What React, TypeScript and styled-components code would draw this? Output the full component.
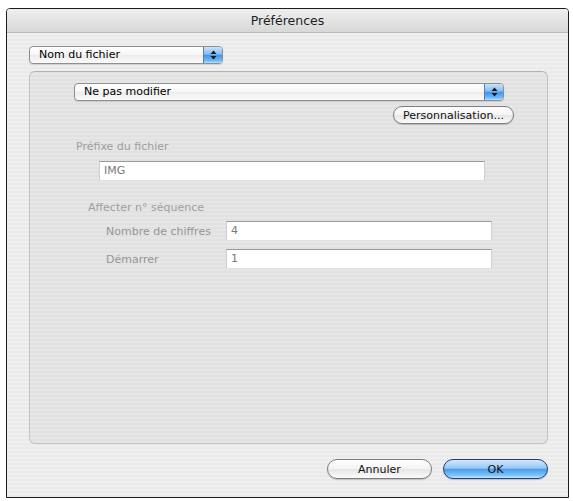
import styled, { createGlobalStyle } from "styled-components";

const GlobalStyle = createGlobalStyle`
  html, body {
    margin: 0;
    padding: 0;
    background: #ffffff;
  }
  body {
    font-family: "DejaVu Sans", "Lucida Grande", sans-serif;
  }
`;

const Page = styled.div`
  padding: 8px 0 0 6px;
`;

const Window = styled.div`
  box-sizing: border-box;
  width: 563px;
  height: 490px;
  display: flex;
  flex-direction: column;
  border: 1px solid #1c1c1c;
  border-radius: 4px 4px 0 0;
  overflow: hidden;
  background: repeating-linear-gradient(
    to bottom,
    #efefef 0,
    #efefef 2px,
    #eaeaea 2px,
    #eaeaea 4px
  );
`;

const TitleBar = styled.div`
  height: 23px;
  flex: none;
  display: flex;
  align-items: center;
  justify-content: center;
  font-size: 12.5px;
  color: #1e1e1e;
  border-bottom: 1px solid #bcbcbc;
  background: linear-gradient(#efefef, #d8d8d8);
`;

const Content = styled.div`
  flex: 1;
  display: flex;
  flex-direction: column;
  padding: 13px 20px 0 22px;
`;

const PopUp = styled.div<{ $width: number; $indent: number }>`
  box-sizing: border-box;
  display: flex;
  align-self: flex-start;
  width: ${({ $width }) => $width}px;
  height: 18px;
  margin-left: ${({ $indent }) => $indent}px;
  border: 1px solid #8f8f8f;
  border-radius: 4px;
  overflow: hidden;
  background: linear-gradient(#ffffff, #f6f6f6 50%, #ececec 51%, #fbfbfb);
  box-shadow: 0 1px 1px rgba(0, 0, 0, 0.12);
  font-size: 11px;
  color: #000;
`;

const PopUpText = styled.span`
  flex: 1;
  padding-left: 9px;
  line-height: 16px;
`;

const PopUpCap = styled.span`
  width: 18px;
  display: flex;
  align-items: center;
  justify-content: center;
  border-left: 1px solid #4f7fc0;
  background: linear-gradient(
    #c9e2fb,
    #86bbf1 45%,
    #4294e8 52%,
    #6fb8f8 85%,
    #b8e0ff
  );
`;

const GroupBox = styled.div`
  box-sizing: border-box;
  height: 373px;
  margin-top: 7px;
  padding-top: 11px;
  display: flex;
  flex-direction: column;
  border: 1px solid #c2c2c2;
  border-top-color: #b2b2b2;
  border-radius: 6px;
  background: rgba(0, 0, 0, 0.035);
`;

const ButtonRow = styled.div`
  display: flex;
  justify-content: flex-end;
  padding-right: 33px;
  margin-top: 5px;
`;

const PushButton = styled.button<{ $default?: boolean; $width: number; $height: number }>`
  box-sizing: border-box;
  width: ${({ $width }) => $width}px;
  height: ${({ $height }) => $height}px;
  padding: 0;
  font-family: inherit;
  font-size: 11px;
  color: #111;
  border-radius: ${({ $height }) => $height / 2}px;
  border: 1px solid ${({ $default }) => ($default ? "#203f78" : "#7d7d7d")};
  background: ${({ $default }) =>
    $default
      ? "linear-gradient(#d3e8fc, #97c8f5 45%, #4f9de9 52%, #7cc3fa 85%, #c4e8ff)"
      : "linear-gradient(#ffffff, #f4f4f4 48%, #e6e6e6 52%, #fbfbfb)"};
  box-shadow: 0 1px 1px rgba(0, 0, 0, 0.18);
`;

const Label = styled.div<{ $indent: number; $top: number }>`
  margin: ${({ $top }) => $top}px 0 0 ${({ $indent }) => $indent}px;
  font-size: 11px;
  line-height: 14px;
  color: #9e9e9e;
`;

const TextField = styled.div<{ $width: number; $indent?: number; $top?: number }>`
  box-sizing: border-box;
  width: ${({ $width }) => $width}px;
  height: 20px;
  margin: ${({ $top = 0 }) => $top}px 0 0 ${({ $indent = 0 }) => $indent}px;
  padding-left: 4px;
  font-size: 11px;
  line-height: 18px;
  color: #7a7a7a;
  background: #ffffff;
  border: 1px solid #cfcfcf;
  border-top-color: #9a9a9a;
  border-bottom-color: #e0e0e0;
`;

const FieldRow = styled.div<{ $top: number }>`
  display: flex;
  align-items: center;
  margin: ${({ $top }) => $top}px 0 0 76px;
`;

const FieldLabel = styled.span`
  width: 120px;
  font-size: 11px;
  color: #959595;
`;

const Footer = styled.div`
  display: flex;
  justify-content: flex-end;
  gap: 11px;
  margin-top: 15px;
`;

const Arrows = () => (
  <svg width="7" height="10" viewBox="0 0 7 10">
    <polygon points="0.5,4 3.5,0.5 6.5,4" fill="#1a1a1a" />
    <polygon points="0.5,6 3.5,9.5 6.5,6" fill="#1a1a1a" />
  </svg>
);

const Select = ({ label, width, indent }: { label: string; width: number; indent: number }) => (
  <PopUp $width={width} $indent={indent}>
    <PopUpText>{label}</PopUpText>
    <PopUpCap>
      <Arrows />
    </PopUpCap>
  </PopUp>
);

const App = () => (
  <Page>
    <GlobalStyle />
    <Window>
      <TitleBar>Préférences</TitleBar>
      <Content>
        <Select label="Nom du fichier" width={194} indent={0} />
        <GroupBox>
          <Select label="Ne pas modifier" width={430} indent={44} />
          <ButtonRow>
            <PushButton $width={121} $height={18}>
              Personnalisation...
            </PushButton>
          </ButtonRow>
          <Label $indent={46} $top={16}>
            Préfixe du fichier
          </Label>
          <TextField $width={386} $indent={69} $top={7}>
            IMG
          </TextField>
          <Label $indent={58} $top={20}>
            Affecter n° séquence
          </Label>
          <FieldRow $top={6}>
            <FieldLabel>Nombre de chiffres</FieldLabel>
            <TextField $width={266}>4</TextField>
          </FieldRow>
          <FieldRow $top={8}>
            <FieldLabel>Démarrer</FieldLabel>
            <TextField $width={266}>1</TextField>
          </FieldRow>
        </GroupBox>
        <Footer>
          <PushButton $width={105} $height={20}>
            Annuler
          </PushButton>
          <PushButton $width={105} $height={20} $default>
            OK
          </PushButton>
        </Footer>
      </Content>
    </Window>
  </Page>
);

export default App;
